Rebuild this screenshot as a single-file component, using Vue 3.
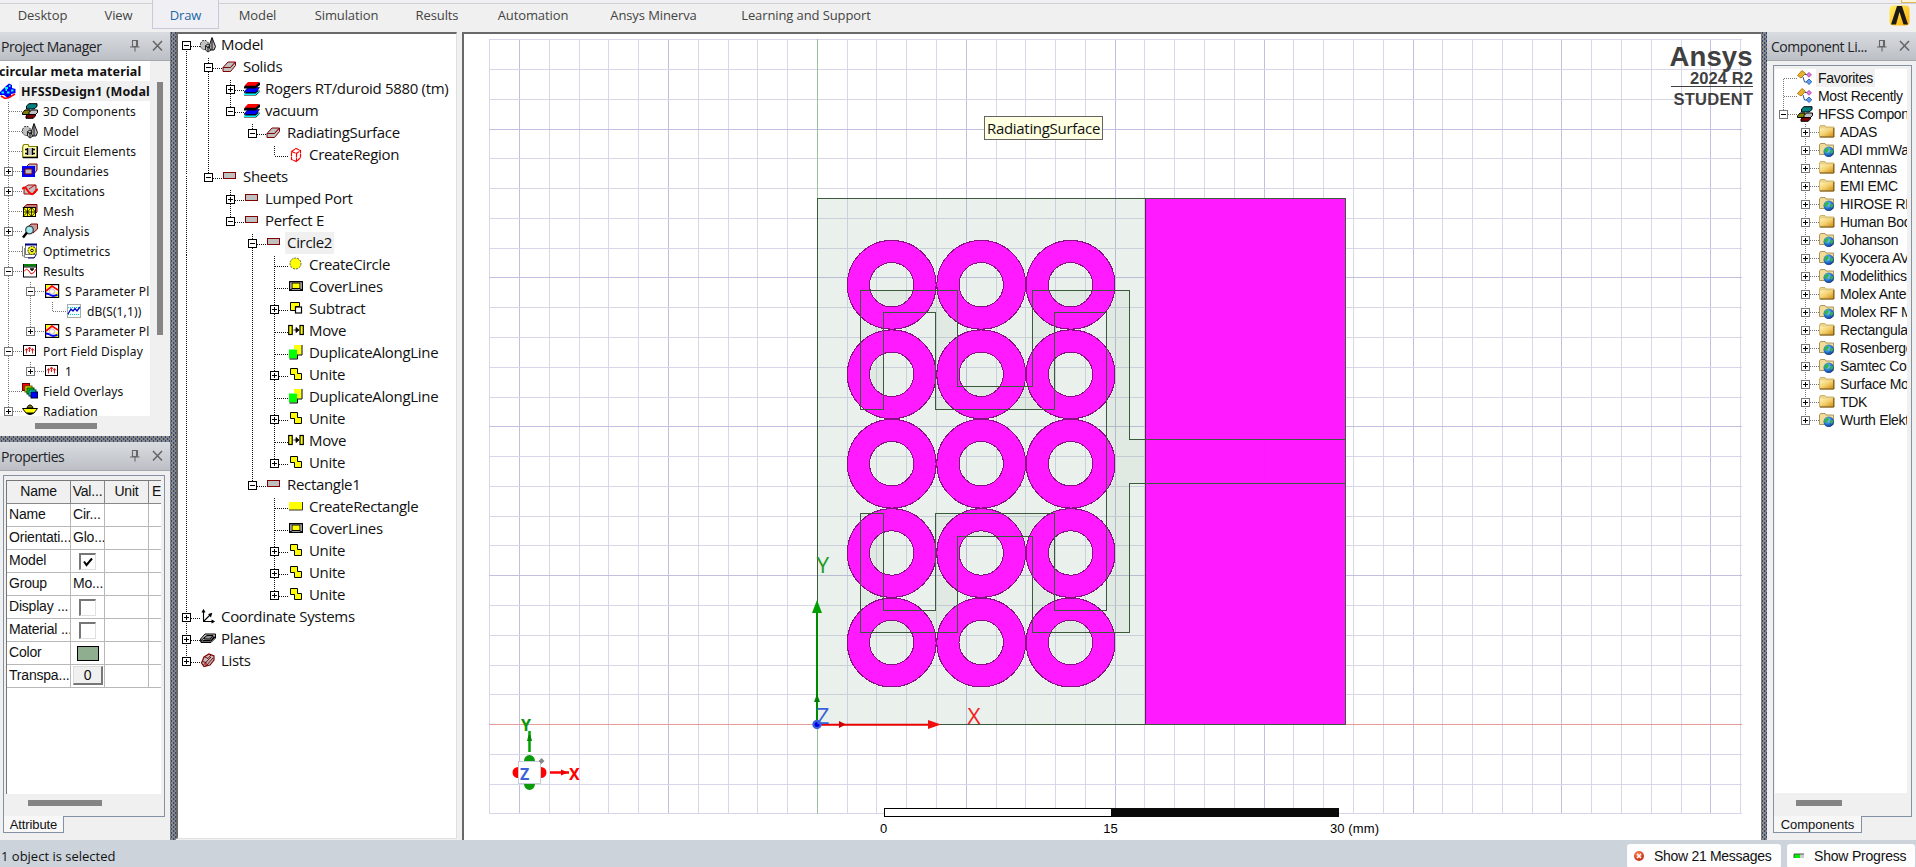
<script setup>
const tabs = [
  { label: 'Desktop', width: 85 },
  { label: 'View', width: 67 },
  { label: 'Draw', width: 67, active: true },
  { label: 'Model', width: 77 },
  { label: 'Simulation', width: 101 },
  { label: 'Results', width: 80 },
  { label: 'Automation', width: 112 },
  { label: 'Ansys Minerva', width: 129 },
  { label: 'Learning and Support', width: 176 },
]

// Row tuples: [depth, icon, label, expander, extra class]
const row = ([depth, icon, label, exp = '', cls = '']) => ({ depth, icon, label, exp, cls })

const projectRows = [
  [-2, '', 'circular meta material', '', 'bold root'],
  [-1, 'design', 'HFSSDesign1 (Modal)', '', 'bold hot'],
  [0, 'stack', '3D Components'],
  [0, 'model', 'Model'],
  [0, 'circuit', 'Circuit Elements'],
  [0, 'boundary', 'Boundaries', '+'],
  [0, 'excite', 'Excitations', '+'],
  [0, 'mesh', 'Mesh'],
  [0, 'analysis', 'Analysis', '+'],
  [0, 'optim', 'Optimetrics'],
  [0, 'results', 'Results', '-'],
  [1, 'plot', 'S Parameter Plot 1', '-'],
  [2, 'trace', 'dB(S(1,1))'],
  [1, 'plot', 'S Parameter Plot 2', '+'],
  [0, 'port', 'Port Field Display', '-'],
  [1, 'port', '1', '+'],
  [0, 'overlay', 'Field Overlays'],
  [0, 'radiation', 'Radiation', '+'],
].map(row)

const modelRows = [
  [0, 'model', 'Model', '-'],
  [1, 'solid', 'Solids', '-'],
  [2, 'material', 'Rogers RT/duroid 5880 (tm)', '+'],
  [2, 'material', 'vacuum', '-'],
  [3, 'solid', 'RadiatingSurface', '-'],
  [4, 'region', 'CreateRegion'],
  [1, 'sheet', 'Sheets', '-'],
  [2, 'sheet', 'Lumped Port', '+'],
  [2, 'sheet', 'Perfect E', '-'],
  [3, 'sheet', 'Circle2', '-', 'hot'],
  [4, 'circle', 'CreateCircle'],
  [4, 'cover', 'CoverLines'],
  [4, 'subtract', 'Subtract', '+'],
  [4, 'move', 'Move'],
  [4, 'dup', 'DuplicateAlongLine'],
  [4, 'unite', 'Unite', '+'],
  [4, 'dup', 'DuplicateAlongLine'],
  [4, 'unite', 'Unite', '+'],
  [4, 'move', 'Move'],
  [4, 'unite', 'Unite', '+'],
  [3, 'sheet', 'Rectangle1', '-'],
  [4, 'rect', 'CreateRectangle'],
  [4, 'cover', 'CoverLines'],
  [4, 'unite', 'Unite', '+'],
  [4, 'unite', 'Unite', '+'],
  [4, 'unite', 'Unite', '+'],
  [0, 'axes', 'Coordinate Systems', '+'],
  [0, 'planes', 'Planes', '+'],
  [0, 'lists', 'Lists', '+'],
].map(row)

const componentRows = [
  [0, 'fav', 'Favorites', '', 'hot'],
  [0, 'fav', 'Most Recently Used'],
  [0, 'stack', 'HFSS Components', '-'],
  [1, 'folder', 'ADAS', '+'],
  [1, 'webfolder', 'ADI mmWave', '+'],
  [1, 'folder', 'Antennas', '+'],
  [1, 'folder', 'EMI EMC', '+'],
  [1, 'webfolder', 'HIROSE RF', '+'],
  [1, 'folder', 'Human Body', '+'],
  [1, 'webfolder', 'Johanson', '+'],
  [1, 'webfolder', 'Kyocera AVX', '+'],
  [1, 'webfolder', 'Modelithics', '+'],
  [1, 'folder', 'Molex Antennas', '+'],
  [1, 'webfolder', 'Molex RF MW', '+'],
  [1, 'folder', 'Rectangular', '+'],
  [1, 'webfolder', 'Rosenberger', '+'],
  [1, 'webfolder', 'Samtec Connectors', '+'],
  [1, 'folder', 'Surface Mount', '+'],
  [1, 'folder', 'TDK', '+'],
  [1, 'webfolder', 'Wurth Elektronik', '+'],
].map(row)

// Dotted connector segments: one horizontal per row, one vertical per sibling group
function connectors(rows, h) {
  const out = []
  rows.forEach((r, i) => {
    if (r.depth < 0) return
    const x = r.depth * 22 + 4.5
    const y = i * h + Math.floor(h / 2) + 0.5
    out.push([x, y, x + 13, y])
    const prev = rows[i - 1]
    if (!prev || prev.depth < r.depth) {
      let last = i
      for (let j = i + 1; j < rows.length && rows[j].depth >= r.depth; j++) {
        if (rows[j].depth === r.depth) last = j
      }
      out.push([x, prev ? i * h + 0.5 : y, x, last * h + h / 2])
    }
  })
  return out
}

const trees = {
  project: { rows: projectRows, lines: connectors(projectRows, 20) },
  model: { rows: modelRows, lines: connectors(modelRows, 22) },
  component: { rows: componentRows, lines: connectors(componentRows, 18) },
}

const props = [
  { name: 'Name', text: 'Cir...' },
  { name: 'Orientati...', text: 'Glo...' },
  { name: 'Model', check: true, on: true },
  { name: 'Group', text: 'Mo...' },
  { name: 'Display ...', check: true },
  { name: 'Material ...', check: true },
  { name: 'Color', swatch: true },
  { name: 'Transpa...', button: '0' },
]

const STEP = 29.78
const vLines = Array.from({ length: 43 }, (_, k) => ({
  x: Math.floor(817.4 + (k - 11) * STEP) + 0.5,
  major: (k + 4) % 5 === 0,
}))
const hLines = Array.from({ length: 27 }, (_, k) => ({
  y: Math.floor(724.6 + (k - 23) * STEP) + 0.5,
  major: (k + 2) % 5 === 0,
}))

const rings = []
for (const cy of [284.8, 374.3, 463.7, 553, 642.5]) {
  for (const cx of [891.7, 981.2, 1070.6]) rings.push({ cx, cy })
}
const strip =
  'M860.5 290.5H957.5V386.5H1032.5V290.5H1129.5V439.5H1345.5V483.5H1129.5V632.5H1032.5V536.5H957.5V632.5H860.5V513.5H883.5V610.5H935.5V513.5H1054.5V610.5H1106.5V312.5H1054.5V409.5H935.5V312.5H883.5V409.5H860.5Z'
</script>

<template>
  <div class="app">
    <svg class="sprite" width="0" height="0">
      <defs>
        <pattern id="hatch" width="4" height="4" patternUnits="userSpaceOnUse">
          <rect width="4" height="4" fill="#8a8a8a" />
          <rect x="1" y="0" width="1" height="2" fill="#2f4270" />
          <rect x="3" y="2" width="1" height="2" fill="#2f4270" />
          <rect x="0" y="2" width="1" height="2" fill="#777" />
        </pattern>
        <linearGradient id="gold" x1="0" y1="0" x2="1" y2="1">
          <stop offset="0" stop-color="#fff3b8" /><stop offset=".5" stop-color="#f3cf6b" /><stop offset="1" stop-color="#cf8e13" />
        </linearGradient>
        <radialGradient id="globe" cx=".4" cy=".35" r=".7">
          <stop offset="0" stop-color="#9fe0ff" /><stop offset=".5" stop-color="#2b7fd6" /><stop offset="1" stop-color="#0a2f86" />
        </radialGradient>
        <linearGradient id="brand" x1="0" y1="0" x2="1" y2="1">
          <stop offset="0" stop-color="#fff06a" /><stop offset="1" stop-color="#ffb000" />
        </linearGradient>
        <radialGradient id="alert" cx=".4" cy=".3" r=".8">
          <stop offset="0" stop-color="#ff8a5c" /><stop offset="1" stop-color="#b81c08" />
        </radialGradient>
      </defs>
      <symbol id="i-model" viewBox="0 0 16 16">
        <path d="M.5 6.500L2.500 3.500H6L8.500 6V10.500L6 12.500H3L.5 10z" fill="#c0c0c0" stroke="#333" stroke-dasharray="2 1" />
        <path d="M5.500 8.500L8 7L11 8.500V13L8 15L5.500 13z" fill="#c0c0c0" stroke="#222" />
        <path d="M12 .5L15.500 9.500L14 13H10.500L9 9.500z" fill="#b8b8b8" stroke="#111" />
        <path d="M12 1V13M8 9.500V14M5.500 9L8 10.500L10.500 9" stroke="#111" fill="none" />
      </symbol>
      <symbol id="i-solid" viewBox="0 0 16 16">
        <path d="M1 8.500L6 3H13.500L8.500 8.500V12.500H1z" fill="#c0c0c0" stroke="#800000" />
        <path d="M8.500 12.500L13.500 6.500V3L8.500 8.500H1" fill="#c0c0c0" stroke="#800000" />
      </symbol>
      <symbol id="i-sheet" viewBox="0 0 16 16"><rect x="1.500" y="3.500" width="12" height="6" fill="#c0c0c0" stroke="#800000" /></symbol>
      <symbol id="i-material" viewBox="0 0 16 16">
        <path d="M0 13.500L4 9.500H15.500V11L12 14.500H0z" fill="#000" /><path d="M0 12.500H11.500L15 9.500V11L11.500 14H0z" fill="#00ffff" />
        <path d="M0 11L4 6.500H15.500L12 11.500H0z" fill="#0000ff" stroke="#000" stroke-width=".6" />
        <path d="M0 5.500L4 1.500H16V4L11.500 7.500H0z" fill="#000" /><path d="M.5 4.700L4 1H15.500L11.500 4.700z" fill="#f00" />
      </symbol>
      <symbol id="i-region" viewBox="0 0 16 16"><path d="M3.500 4.500L8 1.500L12.500 3.500V10.500L8.500 14.500L3.500 12.500zM3.500 4.500L8.500 6.500L12.500 3.500M8.500 6.500V14" fill="none" stroke="#f00" stroke-width="1.200" stroke-dasharray="4 .5" /></symbol>
      <symbol id="i-circle" viewBox="0 0 16 16"><circle cx="7.500" cy="6.500" r="5.500" fill="#ff0" stroke="#333" stroke-width=".8" stroke-dasharray="2 1" /></symbol>
      <symbol id="i-cover" viewBox="0 0 16 16"><rect x="1.700" y="2.700" width="12.600" height="8.600" fill="#fff" stroke="#000" stroke-width="1.400" /><rect x="4" y="4" width="8" height="5.500" fill="#ff0" stroke="#000" /><path d="M4 10L2 11M12 10L14 11" stroke="#000" /></symbol>
      <symbol id="i-subtract" viewBox="0 0 16 16"><path d="M2.500 1.500H11.500V5.500H7.500V9.500H2.500z" fill="#ff0" stroke="#000" /><rect x="7.500" y="6" width="6" height="6" fill="#fff" stroke="#000" stroke-width="1.200" /></symbol>
      <symbol id="i-move" viewBox="0 0 16 16"><rect x=".7" y="2.500" width="3.500" height="9" fill="#ff0" stroke="#000" stroke-width="1.200" /><rect x="12" y="2.500" width="3.300" height="9" fill="#ff0" stroke="#000" stroke-width="1.200" /><path d="M5.500 7H8M8 4.500L11 7L8 9.500z" fill="#000" stroke="#000" stroke-width=".8" /></symbol>
      <symbol id="i-dup" viewBox="0 0 16 16"><path d="M6 0H13.500V9.500H9V4H6z" fill="#ff0" /><path d="M14 0V10H10" fill="none" stroke="#000" /><path d="M1 4.500H9V13.500H1z" fill="#0f0" /><path d="M9.500 9.500V14H1.500" fill="none" stroke="#000" /></symbol>
      <symbol id="i-unite" viewBox="0 0 16 16"><path d="M2.500 1.500H9.500V6.500H13.500V12.500H6.500V7.500H2.500z" fill="#ff0" stroke="#000" /></symbol>
      <symbol id="i-rect" viewBox="0 0 16 16"><rect x="1" y="3" width="14" height="8" fill="#ff0" /><path d="M1 11H14.500V3" fill="none" stroke="#333" /></symbol>
      <symbol id="i-axes" viewBox="0 0 16 16"><path d="M3.500 2V12.500H13M3.500 12.500L11 5M2 3.500L3.500 1L5 3.500M11.500 11L14 12.500L11.500 14M8.500 5.500L11.500 4.500L10.500 8" fill="none" stroke="#000" stroke-width="1.100" /></symbol>
      <symbol id="i-planes" viewBox="0 0 16 16"><path d="M.5 10L5 6H15L11 10zM.5 8L5 3H15.500V7L11 11.500H1z" fill="#c0c0c0" stroke="#000" /><path d="M4 7L7 4.500H13L10 8H4zM3 9.500H10L14 6" fill="#909090" stroke="#000" /></symbol>
      <symbol id="i-lists" viewBox="0 0 16 16"><path d="M1.500 10L4 4L9 1L14 3V7L10 12L4 13.500z" fill="#c0c0c0" stroke="#800000" stroke-width="1.200" /><path d="M3.500 12L11 4M6.500 12.500L13 5M2.500 8.500L6 9.500V13M5 4L8 5.500L11 2" fill="none" stroke="#800000" /></symbol>
      <symbol id="i-design" viewBox="0 0 16 16"><path d="M0 9L3 6L6 3L9 .5L12 2V5L15.500 6V10L11 11V14L8 15.500L4 12H0z" fill="#00f" /><path d="M1.500 9.500H4M5 5H8M7 9.500H9.500M11 7.500H13.500M9 3H10.500M5.500 7H7" stroke="#0ff" stroke-width="2" /><path d="M1 13L5 15.500L9 14.500L15 11" stroke="#f00" stroke-width="1.500" fill="none" /></symbol>
      <symbol id="i-stack" viewBox="0 0 16 16"><path d="M4.500 3L7 .7H15V3.500L12 6H4.500z" fill="#008080" stroke="#000" /><path d="M.5 10L3 7H8V11.500H.5z" fill="#808000" stroke="#000" /><path d="M7 9.500L9.500 7H15.500V9.500L13 12H7z" fill="#c0c0c0" stroke="#000" /><path d="M4 13L6 11.500H13.500V13L11 15.300H4z" fill="#800000" stroke="#000" /></symbol>
      <symbol id="i-circuit" viewBox="0 0 16 16"><path d="M.7 3.500L2 1.500H6L7 3.500H15.300V14.300H.7z" fill="#ffffb0" stroke="#808000" stroke-width="1.200" /><path d="M15.300 3.500V14.500H1" stroke="#000" stroke-width="1.300" fill="none" /><rect x="5.500" y="5" width="5" height="7" fill="#c0c0c0" /><path d="M3 6.500H5M3 10.500H5M11 6.500H13M11 10.500H13M5.500 5V12M10.500 5V12" stroke="#000" stroke-width="1.400" /></symbol>
      <symbol id="i-boundary" viewBox="0 0 16 16"><path d="M4 4L7 1H15V7L12 11H4z" fill="#c0c0c0" stroke="#800000" /><rect x="1.500" y="4.500" width="10" height="8" fill="#b8b8b8" stroke="#00f" stroke-width="3" /><rect x="3" y="6" width="7" height="5" fill="none" stroke="#800000" /></symbol>
      <symbol id="i-excite" viewBox="0 0 16 16"><path d="M2 5L6 2H14V9L11 11H2z" fill="#c0c0c0" stroke="#a00000" /><path d="M0 6C3 3 4 5 6 8S11 13 13 8.500L16 6" fill="none" stroke="#f00" stroke-width="2" /><path d="M7 6L13 2" stroke="#d00" /></symbol>
      <symbol id="i-mesh" viewBox="0 0 16 16"><path d="M2 4L5 1.500H15V9L12 12z" fill="#c08080" stroke="#800000" /><rect x="1.500" y="4.500" width="12" height="9" fill="#ff0" stroke="#000" /><path d="M1 9H13.500M5.500 4V13.500M9.500 4V13.500M1 4.500L5.500 9L9.500 4.500L13.500 9M1 13.500L5.500 9L9.500 13.500L13.500 9" stroke="#000" stroke-width=".8" fill="none" /></symbol>
      <symbol id="i-analysis" viewBox="0 0 16 16"><path d="M6 4L9 1H15.500V6L11 10z" fill="#c0a0a0" stroke="#800000" /><circle cx="7.500" cy="7" r="3.800" fill="#9fe8f0" stroke="#444" stroke-width="1.300" /><path d="M5 9.500L1 14.500" stroke="#000" stroke-width="2.500" /></symbol>
      <symbol id="i-optim" viewBox="0 0 16 16"><rect x="3.500" y="1.500" width="11" height="10" fill="#fff" stroke="#777" /><path d="M3 1.500H15" stroke="#00007f" stroke-width="2" /><path d="M.5 3V13H3M2.500 5V14.500H13" fill="none" stroke="#888" /><circle cx="10" cy="7.500" r="4" fill="#ff0" stroke="#554" stroke-width="1.200" stroke-dasharray="2 .8" /><circle cx="10" cy="7.500" r="1.300" fill="#fff" stroke="#000" /><path d="M6 15H12L14 12" stroke="#00007f" fill="none" /></symbol>
      <symbol id="i-results" viewBox="0 0 16 16"><rect x="1.500" y="1.500" width="13" height="12.500" fill="#fff" stroke="#000" /><rect x="2" y="1" width="12" height="2.500" fill="#008000" /><path d="M1 4H15" stroke="#000" /><path d="M2 8.500L4.500 6L7 8L9 11L12 9.500L14 6" stroke="#f00" fill="none" /><path d="M8 6H12M10 6V8" stroke="#000" stroke-width="1.500" /></symbol>
      <symbol id="i-plot" viewBox="0 0 16 16"><rect x="1.600" y="1.600" width="13" height="12.800" fill="#fff" stroke="#000" stroke-width="1.200" /><path d="M2 2H7L2 6zM14 14V8L9 14z" fill="#ff0" /><path d="M2 8L8 3L14 7" stroke="#f00" stroke-width="1.800" fill="none" /><path d="M2 10.500C5 10.500 7 12 9 13L13.500 12" stroke="#00f" stroke-width="1.800" fill="none" /><circle cx="8" cy="8.500" r="2.700" fill="#fffbe0" stroke="#bbb" /></symbol>
      <symbol id="i-trace" viewBox="0 0 16 16"><rect x="1.500" y="1.500" width="13" height="13" fill="#f6ffff" stroke="#aaa" /><path d="M2 4.500H14M2 11.500H14" stroke="#0cc" stroke-dasharray="1 1" /><path d="M2 11L5 6L7 8L9 5.500L11 8L14 4" stroke="#0000c0" stroke-width="1.300" fill="none" /></symbol>
      <symbol id="i-port" viewBox="0 0 16 16"><rect x="1.500" y="2.500" width="12" height="10" fill="#fff" stroke="#000" /><path d="M4.500 6V10.500M7.500 4.500V9M10.500 6V10.500M3 7.500L4.500 5.500L6 7.500M6 6L7.500 4L9 6M9 7.500L10.500 5.500L12 7.500" stroke="#e00000" stroke-width=".9" fill="none" /></symbol>
      <symbol id="i-overlay" viewBox="0 0 16 16"><rect x=".5" y=".5" width="7" height="7" fill="#f00" stroke="#600" /><rect x="3" y="3" width="7" height="6" fill="#ff0" stroke="#550" /><rect x="5" y="5" width="7" height="6" fill="#0f0" stroke="#030" /><rect x="7" y="7" width="7" height="6" fill="#0ff" stroke="#033" /><rect x="9" y="9" width="6.500" height="6" fill="#00f" stroke="#003" /></symbol>
      <symbol id="i-radiation" viewBox="0 0 16 16"><path d="M5 5C6 1 10 1 11 5z" fill="#808000" stroke="#000" /><path d="M.5 5.500H15.500L12 10H4z" fill="#ff0" stroke="#000" /><path d="M4 10C6 12.500 10 12.500 12 10z" fill="#000" /></symbol>
      <symbol id="i-fav" viewBox="0 0 16 16"><path d="M.5 5.500L5 .5L8.500 3.500L4 8z" fill="#e8b030" stroke="#b27d10" /><path d="M8 4.500H11M6 7L7.500 12H10" stroke="#3050a0" fill="none" /><path d="M12 2.500L14.500 4.800L12 7.200L9.500 4.800z" fill="#e07adf" stroke="#a040a0" stroke-width=".8" /><path d="M12 9L14.800 11.800L12 14.500L9.200 11.800z" fill="#5aa0f0" stroke="#2050a0" stroke-width=".8" /></symbol>
      <symbol id="i-folder" viewBox="0 0 16 16"><path d="M.5 3L1.500 1.500H6L7 3H15V13H.5z" fill="#e9d28a" stroke="#c5a552" stroke-width=".8" /><path d="M1 4.500H14.500V12.500H1z" fill="url(#gold)" /><path d="M1 13H14.800V4" fill="none" stroke="#6e4a0c" /></symbol>
      <symbol id="i-webfolder" viewBox="0 0 16 16"><path d="M.5 3L1.500 1.500H6L7 3H14.500V12.500H.5z" fill="#f1dc98" stroke="#a58a50" stroke-width=".9" /><circle cx="9.700" cy="9.800" r="5.200" fill="url(#globe)" /><path d="M6 7L9 5.500L10 8L7.500 11L5.500 10zM12 8L14.500 8.500L13 12L11 10z" fill="#33b54a" /></symbol>
    </svg>

    <header class="tabs">
      <div v-for="t in tabs" :key="t.label" class="tab" :class="{ active: t.active }" :style="{ width: t.width + 'px' }">{{ t.label }}</div>
      <div class="corner"></div>
      <svg class="logo" viewBox="0 0 21 21" width="21" height="21">
        <rect x=".5" y=".5" width="20" height="20" rx="4" fill="url(#brand)" />
        <path d="M8 1H13L19 19.500H14.500L10.500 7L7 19.500H2z" fill="#1c1a17" />
      </svg>
    </header>

    <main class="work">
      <aside class="left">
        <section class="panel project">
          <div class="phead"><span>Project Manager</span>
            <svg class="tools" width="36" height="14" viewBox="0 0 36 14"><path d="M3.500 1.500H8.500V7.500H3.500zM1 8H10.500M6 8V12.500M7.500 2V7" class="pin" /><path d="M24 2L33 11.500M33 2L24 11.500" class="x" /></svg>
          </div>
          <div class="tree t-project">
            <svg class="lines"><line v-for="(l, i) in trees.project.lines" :key="i" :x1="l[0]" :y1="l[1]" :x2="l[2]" :y2="l[3]" /></svg>
            <div v-for="(r, i) in trees.project.rows" :key="i" class="row" :class="r.cls" :style="{ marginLeft: r.depth * 22 + 'px' }">
              <span class="exp" :class="{ on: r.exp, plus: r.exp === '+' }"></span>
              <svg class="icon"><use v-if="r.icon" :href="'#i-' + r.icon" /></svg>
              <span class="label">{{ r.label }}</span>
            </div>
          </div>
          <div class="thumb v"></div>
          <div class="thumb h1"></div>
        </section>
        <svg class="hsplit" width="170" height="6"><rect width="170" height="6" fill="url(#hatch)" /></svg>
        <section class="panel">
          <div class="phead"><span>Properties</span>
            <svg class="tools" width="36" height="14" viewBox="0 0 36 14"><path d="M3.500 1.500H8.500V7.500H3.500zM1 8H10.500M6 8V12.500M7.500 2V7" class="pin" /><path d="M24 2L33 11.500M33 2L24 11.500" class="x" /></svg>
          </div>
          <div class="frame props">
            <div class="sheet">
              <table>
                <thead><tr><th>Name</th><th>Val...</th><th>Unit</th><th class="cut">E</th></tr></thead>
                <tbody>
                  <tr v-for="p in props" :key="p.name">
                    <td>{{ p.name }}</td>
                    <td>
                      <span v-if="p.check" class="check"><svg v-if="p.on" width="12" height="12" viewBox="0 0 12 12"><path d="M2 5.500L4.500 9L10 2.500" /></svg></span>
                      <span v-else-if="p.swatch" class="swatch"></span>
                      <span v-else-if="p.button" class="btn">{{ p.button }}</span>
                      <template v-else>{{ p.text }}</template>
                    </td>
                    <td></td><td></td>
                  </tr>
                </tbody>
              </table>
            </div>
            <div class="thumb h2"></div>
          </div>
          <div class="ptab attr">Attribute</div>
        </section>
      </aside>

      <svg class="vsplit" width="6" height="808"><rect width="6" height="808" fill="url(#hatch)" /></svg>

      <section class="modeler">
        <div class="tree t-model">
          <svg class="lines"><line v-for="(l, i) in trees.model.lines" :key="i" :x1="l[0]" :y1="l[1]" :x2="l[2]" :y2="l[3]" /></svg>
          <div v-for="(r, i) in trees.model.rows" :key="i" class="row" :class="r.cls" :style="{ marginLeft: r.depth * 22 + 'px' }">
            <span class="exp" :class="{ on: r.exp, plus: r.exp === '+' }"></span>
            <svg class="icon"><use :href="'#i-' + r.icon" /></svg>
            <span class="label">{{ r.label }}</span>
          </div>
        </div>
      </section>

      <section class="view">
        <svg class="canvas" width="1296" height="804" viewBox="464 34 1296 804">
          <g shape-rendering="crispEdges">
            <line v-for="l in vLines" :key="'v' + l.x" :x1="l.x" :x2="l.x" y1="39" y2="814" :class="l.major ? 'gM' : 'g'" />
            <line v-for="l in hLines" :key="'h' + l.y" :y1="l.y" :y2="l.y" x1="489" x2="1742" :class="l.major ? 'gM' : 'g'" />
            <path d="M489 724.500H1742" stroke="#e79a9a" /><path d="M817.500 39V814" stroke="#9cc09c" />
            <path d="M817.500 198.500H1345.500V724.500H817.500z" fill="#8cb496" fill-opacity=".18" />
            <path :d="strip" fill="#8fae8f" fill-opacity=".11" />
            <rect x="1145.500" y="198.500" width="200" height="526" fill="#ff14ff" fill-opacity=".975" stroke="#5a1e5a" />
            <g class="rings">
              <g v-for="(c, i) in rings" :key="i">
                <circle :cx="c.cx" :cy="c.cy" r="33.300" stroke="#ff14ff" stroke-width="22.500" stroke-opacity=".975" />
                <circle :cx="c.cx" :cy="c.cy" r="44.400" stroke="#85107f" /><circle :cx="c.cx" :cy="c.cy" r="22.200" stroke="#85107f" />
              </g>
            </g>
            <path :d="strip" class="edge" />
            <path d="M1145.500 198.500H817.500V724.500H1345.500V198.500H1145.500" class="edge" />
          </g>
          <g class="axis">
            <path d="M817 724V612" stroke="#008a00" stroke-width="2" /><path d="M817 600L822 613H812z" fill="#00a000" /><path d="M817 694L820 702H814z" fill="#008000" />
            <path d="M817 724.700H930" stroke="#e80000" stroke-width="2" /><path d="M941 724.500L928 720V729z" fill="#f01010" /><path d="M846 724.500L839 721V728z" fill="#d00000" />
            <circle cx="817" cy="724.500" r="4.700" fill="#3b62d8" /><circle cx="817" cy="724.500" r="2.500" fill="#0000f0" />
            <text x="816.500" y="572.500" fill="#1f9a1f">Y</text><text x="967.500" y="724" fill="#f52020">X</text><text x="816.500" y="724" fill="#3b62d8">Z</text>
          </g>
          <g class="triad">
            <path d="M529.500 752V731" stroke="#00a000" stroke-width="2.500" /><path d="M527 741L528.500 735H530.500L532 741z" fill="#008a00" />
            <path d="M524 761A5.500 6 0 0 1 535 761zM524 784A5.500 6 0 0 0 535 784z" fill="#0a9a0a" />
            <path d="M518 767A5.500 5.500 0 0 0 518 778zM541 767A5.500 5.500 0 0 1 541 778z" fill="#f00" />
            <path d="M550 772.500H569" stroke="#f00" stroke-width="2.500" /><path d="M561 769.500L568 772.500L561 775.500z" fill="#e00" />
            <rect x="518.500" y="761.500" width="22" height="22" fill="#fff" stroke="#c4ced8" /><path d="M541.500 758L544.500 761L541.500 764L538.500 761z" fill="#888" />
            <text x="521" y="730.500" fill="#0a940a">Y</text><text x="520" y="780" fill="#3b62d8">Z</text><text x="569" y="780" fill="#f00">X</text>
          </g>
          <g class="scale">
            <rect x="884.500" y="808.500" width="454" height="8" fill="#fff" stroke="#000" /><rect x="1111" y="808" width="228" height="9" fill="#0a0a0a" />
            <text x="883.500" y="833" text-anchor="middle">0</text><text x="1110.500" y="833" text-anchor="middle">15</text><text x="1330" y="833" textLength="49">30 (mm)</text>
          </g>
          <g class="mark">
            <text x="1669.500" y="65.500" font-size="27.500" textLength="83">Ansys</text>
            <text x="1690" y="83.500" font-size="16.500" textLength="63">2024 R2</text>
            <rect x="1671" y="86" width="82" height="1" />
            <text x="1673.500" y="105" font-size="16.500" textLength="79.500">STUDENT</text>
          </g>
        </svg>
        <div class="tip">RadiatingSurface</div>
      </section>

      <svg class="vsplit" width="6" height="808"><rect width="6" height="808" fill="url(#hatch)" /></svg>

      <aside class="right panel">
        <div class="phead"><span>Component Li...</span>
          <svg class="tools" width="36" height="14" viewBox="0 0 36 14"><path d="M3.500 1.500H8.500V7.500H3.500zM1 8H10.500M6 8V12.500M7.500 2V7" class="pin" /><path d="M24 2L33 11.500M33 2L24 11.500" class="x" /></svg>
        </div>
        <div class="frame comps">
          <div class="tree t-comp">
            <svg class="lines"><line v-for="(l, i) in trees.component.lines" :key="i" :x1="l[0]" :y1="l[1]" :x2="l[2]" :y2="l[3]" /></svg>
            <div v-for="(r, i) in trees.component.rows" :key="i" class="row" :class="r.cls" :style="{ marginLeft: r.depth * 22 + 'px' }">
              <span class="exp" :class="{ on: r.exp, plus: r.exp === '+' }"></span>
              <svg class="icon"><use :href="'#i-' + r.icon" /></svg>
              <span class="label">{{ r.label }}</span>
            </div>
          </div>
          <div class="thumb h3"></div>
        </div>
        <div class="ptab comp">Components</div>
      </aside>
    </main>

    <footer class="status">
      <span class="msg">1 object is selected</span>
      <div class="sbtn b1"><svg width="12" height="12" viewBox="0 0 12 12"><circle cx="6" cy="6" r="5" fill="url(#alert)" /><path d="M4 4L8 8M8 4L4 8" stroke="#fff" stroke-width="1.600" /></svg>Show 21 Messages</div>
      <div class="sbtn b2"><svg width="12" height="12" viewBox="0 0 12 12"><rect x="1" y="4" width="10" height="4" fill="#ccc" /><rect x="1" y="4" width="6" height="4" fill="#0e0" /><path d="M1 8V4H11" fill="none" stroke="#555" /></svg>Show Progress</div>
    </footer>
  </div>
</template>

<style>
body { margin: 0; overflow: hidden; }
</style>

<style scoped>
.app { width: 1916px; height: 867px; display: flex; flex-direction: column; background: #f0f0f0; color: #111; font: 13px "Liberation Sans", Arial, sans-serif; overflow: hidden; white-space: nowrap; }
.app *, .app { box-sizing: border-box; }
.sprite { position: absolute; }
.tabs { height: 32px; flex: none; display: flex; position: relative; background: linear-gradient(#f0eff1 3px, #cfcfd5 3px, #cfcfd5 4px, #f0f0f0 4px); font: 13px/29px "Open Sans", "Noto Sans", sans-serif; letter-spacing: -0.1px; color: #444; }
.tab { height: 29px; text-align: center; padding-top: 1px; }
.tab.active { color: #1b66a5; background: #f0f0f4; border: 1px solid #cac9db; border-top: 0; }
.corner { position: absolute; right: 0; top: 0; width: 15px; height: 3px; background: #fdf6d8; border: 1px solid #e0b85a; border-width: 0 0 1px 1px; }
.logo { position: absolute; right: 6px; top: 5px; }
.work { height: 808px; flex: none; display: flex; }
.left { width: 170px; display: flex; flex-direction: column; overflow: hidden; }
.hsplit, .vsplit { display: block; flex: none; }
.panel { display: flex; flex-direction: column; position: relative; }
.project { height: 404px; }
.phead { height: 29px; flex: none; display: flex; justify-content: space-between; align-items: center; padding: 0 5px 0 1px; background: linear-gradient(#d9dde1, #bcc0c6); border-bottom: 1px solid #a4a8ad; font: 14px "Open Sans", "Noto Sans", sans-serif; letter-spacing: -0.45px; color: #1e2226; }
.tools .pin { fill: none; stroke: #666; stroke-width: 1.1; }
.tools .x { stroke: #666; stroke-width: 1.6; fill: none; }

.tree { position: relative; overflow: hidden; background: #fff; }
.lines { position: absolute; top: 0; width: 120px; height: 660px; shape-rendering: crispEdges; }
.lines line { stroke: #111; stroke-dasharray: 1 1; }
.row { display: flex; position: relative; }
.exp { width: 9px; height: 9px; flex: none; margin-right: 9px; }
.exp.on { border: 1px solid #000; background: linear-gradient(#000, #000) center / 5px 1px no-repeat #fff; }
.exp.plus { background: linear-gradient(#000, #000) center / 5px 1px no-repeat, linear-gradient(#000, #000) center / 1px 5px no-repeat, #fff; }
.icon { width: 16px; height: 16px; flex: none; margin-right: 3px; }
.label { padding: 0 2px; }
.hot .label { background: #f0f0f0; }
.bold { font-weight: 700; }

.t-project { width: 150px; height: 355px; padding-left: 4px; font: 12px/21px "Noto Sans", "DejaVu Sans", sans-serif; letter-spacing: 0.13px; }
.t-project .row { height: 20px; }
.t-project .exp { margin-top: 6px; }
.t-project .icon { margin-top: 2px; }
.t-project .lines line, .t-comp .lines line { stroke: #777; }
.t-project .exp.on, .t-comp .exp.on { border-color: #777; }
.t-project .root .label { margin-left: 0; }
.t-project .bold { font-size: 12.5px; letter-spacing: 0.15px; }
.t-model { height: 640px; margin: 1px 0 0 4px; font: 15px/21px "Open Sans", "Noto Sans", sans-serif; letter-spacing: -0.32px; }
.t-model .row { height: 22px; }
.t-model .label { margin-top: -1px; height: 22px; }
.t-model .exp { margin-top: 6px; }
.t-model .icon { margin-top: 2px; }
.t-comp { width: 132px; height: 724px; margin: 3px 0 0 1px; padding-left: 4px; font: 14px/19px "Liberation Sans", Arial, sans-serif; letter-spacing: -0.3px; }
.t-comp .row { height: 18px; }
.t-comp .exp { margin-top: 5px; }
.t-comp .icon { margin-top: 1px; }

.thumb { position: absolute; background: #858585; }
.thumb.v { left: 157px; top: 50px; width: 6px; height: 253px; }
.thumb.h1 { left: 35px; top: 391px; width: 62px; height: 6px; }
.thumb.h2 { left: 24px; top: 324px; width: 74px; height: 6px; }
.thumb.h3 { left: 22px; top: 734px; width: 46px; height: 6px; }

.frame { position: relative; border: 1px solid #8491a5; }
.props { margin: 4px 0 0 3px; width: 162px; height: 342px; background: #f0f0f0; }
.sheet { margin: 4px 0 0 2px; width: 155px; height: 314px; background: #fff; border: solid #777; border-width: 1px 0 0 1px; overflow: hidden; box-shadow: 0 20px 0 #f0f0f0; }
table { border-collapse: separate; border-spacing: 0; table-layout: fixed; width: 178px; font-size: 14px; letter-spacing: -0.2px; line-height: 20px; }
th { height: 23px; padding: 0 0 2px; font-weight: 400; background: #f0f0f0; border: solid #888; border-width: 0 1px 1px 0; text-align: center; }
th:nth-child(1) { width: 64px; } th:nth-child(2) { width: 34px; } th:nth-child(3) { width: 44px; } th:nth-child(4) { width: 36px; }
th.cut { text-align: left; padding-left: 3px; }
td { height: 23px; padding: 0 0 2px 2px; border: solid #b8b8b8; border-width: 0 1px 1px 0; overflow: hidden; }
.check { display: block; width: 17px; height: 17px; margin: 2px 0 0 6px; border: 1px solid #e0e0e0; border-top: 2px solid #777; border-left: 2px solid #777; }
.check svg { display: block; margin: 1px; }
.check path { fill: none; stroke: #000; stroke-width: 2; }
.swatch { display: block; width: 22px; height: 15px; margin: 2px 0 0 4px; background: #8fae8f; border: 1px solid #000; }
.btn { display: block; width: 30px; height: 19px; line-height: 16px; margin-top: 1px; text-align: center; background: #f0f0f0; border: 1px solid #ddd; border-right: 2px solid #777; border-bottom: 2px solid #777; }
.ptab { height: 17px; margin-top: -1px; position: relative; background: #f7f7f7; border: 1px solid #8491a5; border-top: 0; line-height: 17px; text-align: center; font-size: 13px; }
.attr { width: 61px; margin-left: 3px; letter-spacing: -0.1px; }
.comp { width: 89px; margin-left: 6px; }

.modeler { width: 281px; margin: 0 5px 1px 0; background: #fff; border: 1px solid #696969; border-width: 2px 1px 1px 2px; border-right-color: #e0e0e0; border-bottom-color: #e0e0e0; border-top-color: #696969; }
.view { position: relative; width: 1299px; background: #fff; border: solid #696969; border-width: 2px 0 0 2px; }
.canvas { display: block; }
.g { stroke: #d8d7ea; } .gM { stroke: #c2c0e0; }
.rings circle { fill: none; }
.edge { fill: none; stroke: #3b5a3b; }
.axis text { font: 400 22.5px "Open Sans", "Noto Sans", sans-serif; }
.triad text { font: 700 16px "Noto Sans", sans-serif; }
.scale text { font: 13px "Liberation Sans", sans-serif; fill: #000; }
.mark { font-family: "Liberation Sans", sans-serif; font-weight: 700; fill: #404040; }
.tip { position: absolute; left: 520px; top: 82px; width: 119px; height: 24px; background: #ffffe1; border: 1px solid #646464; font: 15px/22px "Open Sans", "Noto Sans", sans-serif; letter-spacing: -0.3px; text-align: center; }

.right { width: 149px; overflow: hidden; }
.right .phead { padding-left: 4px; padding-right: 4px; }
.comps { margin: 4px 0 0 6px; width: 139px; height: 752px; }

.status { height: 27px; display: flex; background: #cdd3db; align-items: flex-start; font-size: 14px; }
.msg { font: 13px/33px "Open Sans", "Noto Sans", sans-serif; letter-spacing: 0; padding-left: 1px; flex: 1; }
.sbtn { height: 24px; margin-top: 4px; padding-bottom: 1px; background: #fdfdfd; border-radius: 3px; display: flex; align-items: center; }
.b1 { width: 154px; padding-left: 6px; margin-right: 6px; letter-spacing: -0.3px; }
.b2 { width: 128px; padding-left: 6px; margin-right: 1px; letter-spacing: -0.2px; }
.b1 svg { margin-right: 9px; } .b2 svg { margin-right: 9px; }
</style>
